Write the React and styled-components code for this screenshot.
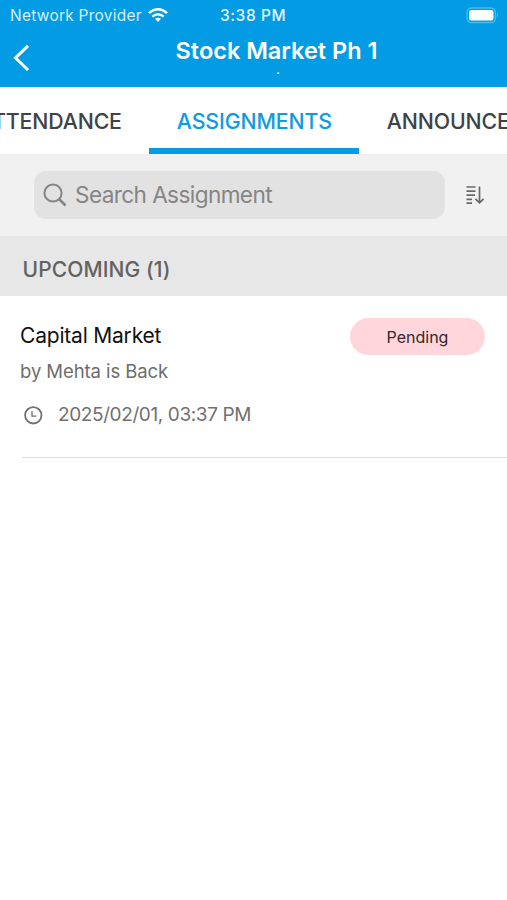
import React from 'react';
import styled, { createGlobalStyle } from 'styled-components';

const GlobalStyle = createGlobalStyle`
  * {
    box-sizing: border-box;
  }
  body {
    margin: 0;
    background-color: #fff;
    font-family: Inter, "Liberation Sans", sans-serif;
  }
`

const Screen = styled.div`
  width: 507px;
  height: 900px;
  overflow: hidden;
  background-color: #fff;
`

const Header = styled.header`
  height: 87px;
  background-color: #039be3;
  color: #fff;
`

const StatusBar = styled.div`
  height: 30px;
  padding: 0 7px 0 10px;
  display: grid;
  grid-template-columns: 210px 1fr auto;
  align-items: center;
  font-size: 15.5px;
  line-height: 31px;
  white-space: nowrap;
`

const Carrier = styled.div`
  display: flex;
  align-items: center;
  gap: 6px;
  color: #d3effc;
  letter-spacing: 0.24px;
`

const Time = styled.span`
  font-weight: 500;
  color: #e3f5fd;
  letter-spacing: 0.6px;
`

const NavBar = styled.div`
  height: 57px;
  padding-left: 12px;
  display: grid;
  grid-template-columns: 18px 1fr 30px;
`

const BackButton = styled.button`
  border: none;
  padding: 13px 0 0;
  background: none;
  color: #fff;
  height: 44px;
  cursor: pointer;
`

const Heading = styled.div`
  display: flex;
  flex-direction: column;
  align-items: center;
  padding-left: 46px;
`

const Title = styled.h1`
  margin: 6px 0 0;
  font-size: 23.5px;
  font-weight: 600;
  line-height: 30px;
  white-space: nowrap;
`

const Subtitle = styled.span`
  padding-left: 3px;
  font-size: 11px;
  font-weight: 600;
  line-height: 8px;
`

const Tabs = styled.nav`
  height: 67px;
  margin-left: 57px;
  display: flex;
  justify-content: center;
  white-space: nowrap;
`

const Tab = styled.div`
  flex: none;
  padding: 0 27.5px;
  height: 67px;
  font-size: 21.3px;
  font-weight: 500;
  line-height: 69px;
  letter-spacing: -0.13px;
  color: ${({ $active }) => ($active ? '#0d9ce3' : '#3e4347')};
  border-bottom: 6px solid ${({ $active }) => ($active ? '#079be3' : 'transparent')};
`

const SearchRow = styled.div`
  height: 82px;
  padding: 0 22px 0 34px;
  display: flex;
  align-items: center;
  justify-content: space-between;
  background-color: #f1f1f1;
`

const SearchBox = styled.div`
  width: 411px;
  height: 48px;
  padding-left: 9px;
  display: flex;
  align-items: center;
  gap: 8px;
  border-radius: 12px;
  background-color: #e2e2e2;
  color: #858585;
  font-size: 22.6px;
  line-height: 26px;
  letter-spacing: -0.6px;
  white-space: nowrap;
`

const SectionTitle = styled.h2`
  margin: 0;
  height: 60px;
  padding: 4px 0 0 22.5px;
  background-color: #e7e7e7;
  color: #626262;
  font-size: 21px;
  font-weight: 500;
  line-height: 60px;
  letter-spacing: 0.1px;
`

const Assignment = styled.article`
  height: 162px;
  padding: 22px 0 0 20px;
  display: flex;
  flex-direction: column;
`

const TopLine = styled.div`
  display: flex;
  justify-content: space-between;
  padding-right: 22px;
  height: 37px;
`

const Name = styled.h3`
  margin: 0;
  font-size: 21px;
  font-weight: 400;
  line-height: 35px;
  letter-spacing: -0.2px;
  color: #111;
`

const Badge = styled.span`
  width: 135px;
  height: 37px;
  border-radius: 19px;
  background-color: #ffd6dc;
  color: #36272b;
  font-size: 16px;
  line-height: 38px;
  text-align: center;
`

const Author = styled.span`
  margin-top: 4px;
  font-size: 18.5px;
  line-height: 24px;
  letter-spacing: -0.08px;
  color: #6d6d6d;
`

const DueDate = styled.div`
  margin-top: 18px;
  padding-left: 4px;
  display: flex;
  align-items: center;
  gap: 15px;
  height: 28px;
  font-size: 19px;
  line-height: 30px;
  letter-spacing: -0.39px;
  color: #707070;
`

const Divider = styled.hr`
  margin: auto 0 0 2px;
  height: 1px;
  border: none;
  background-color: #dcdcdc;
`

const WifiIcon = () => (
  <svg width="20" height="15" viewBox="0 0 20 15" fill="none" stroke="#fff" strokeWidth="2.5">
    <path d="M1 5.1Q10-2.5 19 5.1" />
    <path d="M4.3 8.6Q10 3.9 15.7 8.6" />
    <path d="M7 10.8Q10 8.5 13 10.8L10 14Z" fill="#fff" stroke="none" />
  </svg>
)

const BatteryIcon = () => (
  <svg width="34" height="18" viewBox="0 0 34 18">
    <rect x="1" y="1" width="28.5" height="14.5" rx="4.5" fill="none" stroke="#4fbaee" strokeWidth="1.3" />
    <rect x="3" y="3" width="24.5" height="10.5" rx="2.5" fill="#fff" />
    <path d="M31 5.8q2 2.5 0 5z" fill="#4fbaee" />
  </svg>
)

const BackIcon = () => (
  <svg width="18" height="30" viewBox="0 0 18 30" fill="none" stroke="currentColor" strokeWidth="3">
    <path d="M16 2.8L3.5 14.8 16 27" />
  </svg>
)

const SearchIcon = () => (
  <svg width="24" height="24" viewBox="0 0 24 24" fill="none" stroke="currentColor" strokeWidth="2">
    <circle cx="10" cy="10" r="8.6" />
    <path d="M16 16l6.5 6.5" strokeWidth="2.6" />
  </svg>
)

const SortIcon = () => (
  <svg width="19" height="20" viewBox="0 0 19 20" fill="none" stroke="#696969" strokeWidth="1.7">
    <path d="M0.5 2h9M0.5 6.1h9M0.5 10.2h8.5M0.5 14.3h5.5M0.5 18.2h5.5" />
    <path d="M13.5 1.5v16M9.4 13.8l4.1 4 4.1-4" />
  </svg>
)

const ClockIcon = () => (
  <svg width="19" height="19" viewBox="0 0 19 19" fill="none" stroke="currentColor">
    <circle cx="9.3" cy="9.3" r="8.2" strokeWidth="1.8" />
    <path d="M8 5v5.2h4.4" strokeWidth="1.3" />
  </svg>
)

function App() {
  return (
    <Screen>
      <GlobalStyle />
      <Header>
        <StatusBar>
          <Carrier>Network Provider <WifiIcon /></Carrier>
          <Time>3:38 PM</Time>
          <BatteryIcon />
        </StatusBar>
        <NavBar>
          <BackButton aria-label="Back"><BackIcon /></BackButton>
          <Heading>
            <Title>Stock Market Ph 1</Title>
            <Subtitle>.</Subtitle>
          </Heading>
        </NavBar>
      </Header>
      <Tabs>
        <Tab>ATTENDANCE</Tab>
        <Tab $active>ASSIGNMENTS</Tab>
        <Tab>ANNOUNCEMENTS</Tab>
      </Tabs>
      <SearchRow>
        <SearchBox><SearchIcon />Search Assignment</SearchBox>
        <SortIcon />
      </SearchRow>
      <SectionTitle>UPCOMING (1)</SectionTitle>
      <Assignment>
        <TopLine>
          <Name>Capital Market</Name>
          <Badge>Pending</Badge>
        </TopLine>
        <Author>by Mehta is Back</Author>
        <DueDate><ClockIcon />2025/02/01, 03:37 PM</DueDate>
        <Divider />
      </Assignment>
    </Screen>
  )
}

export default App
